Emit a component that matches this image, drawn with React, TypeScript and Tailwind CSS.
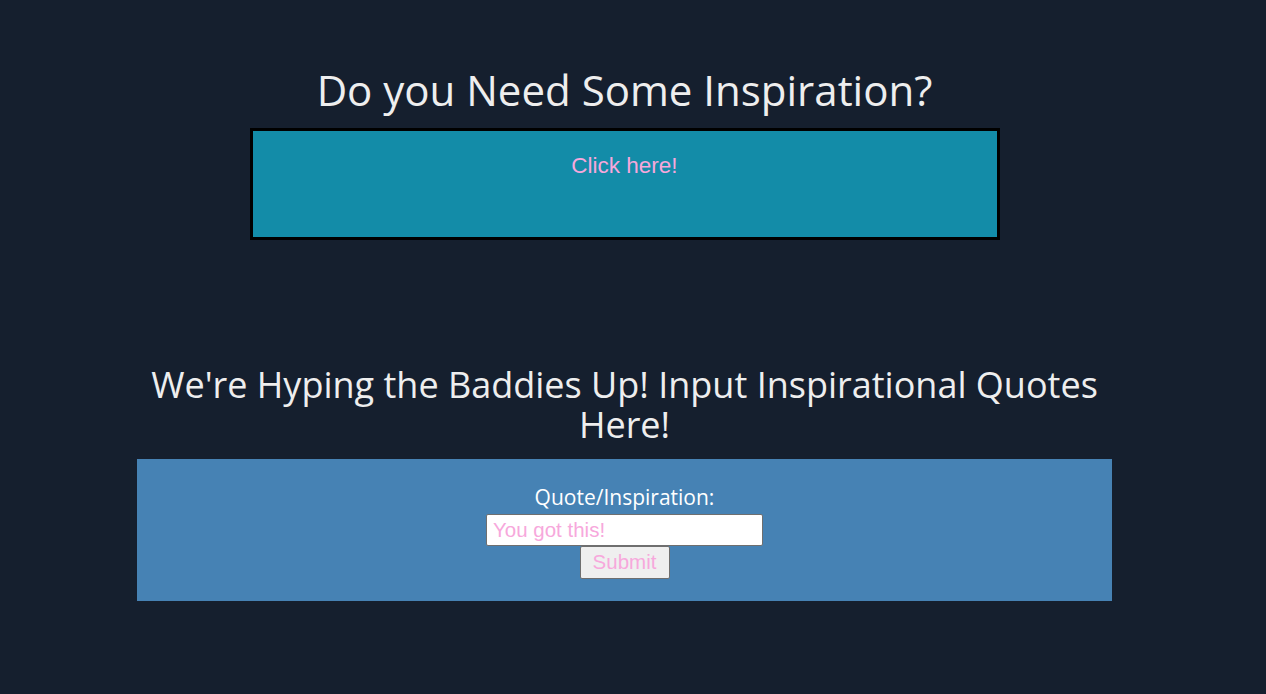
import React from "react";

export default function App() {
  return (
    <div
      className="w-full min-h-[694px] bg-[#151f2e] flex justify-start"
      style={{ fontFamily: '"Open Sans", sans-serif' }}
    >
      <div className="w-[1249px] flex flex-col items-center">
        <h1 className="mt-[63px] text-[42px] leading-[54px] text-[#eeeeee] font-normal">
          Do you Need Some Inspiration?
        </h1>
        <div className="mt-[11px] w-[750px] h-[112px] border-[3px] border-black bg-[#138ca8] flex justify-center">
          <span
            className="mt-[22px] text-[22.5px] leading-[26px] text-[#f7a8dc] h-fit"
            style={{ fontFamily: '"Liberation Sans", Arial, sans-serif' }}
          >
            Click here!
          </span>
        </div>
        <h2 className="mt-[125px] w-[975px] text-center text-[36px] leading-[40px] text-[#eeeeee] font-normal">
          We're Hyping the Baddies Up! Input Inspirational Quotes Here!
        </h2>
        <div className="mt-[14px] w-[975px] h-[142px] bg-[#4682b4] flex flex-col items-center pt-[24px]">
          <label className="text-[21px] leading-[28px] text-white">Quote/Inspiration:</label>
          <input
            defaultValue="You got this!"
            className="box-border mt-[3px] w-[277px] h-[32px] bg-white border border-solid border-[#6f6f6f] rounded-[2px] px-[6px] text-[20.5px] text-[#f7a8dc] outline-none"
            style={{ fontFamily: '"Liberation Sans", Arial, sans-serif' }}
          />
          <button
            className="box-border w-[90px] h-[33px] bg-[#efefef] border border-solid border-[#6f6f6f] rounded-[2px] text-[20.5px] text-[#f7a8dc]"
            style={{ fontFamily: '"Liberation Sans", Arial, sans-serif' }}
          >
            Submit
          </button>
        </div>
      </div>
    </div>
  );
}
